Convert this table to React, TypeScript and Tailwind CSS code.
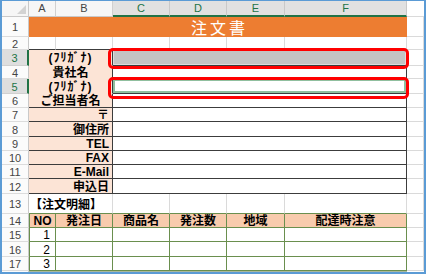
import React from "react";

const GR = "border-r-[#dadada]";
const GB = "border-b-[#dadada]";
const DR = "border-r-[#3c3c3c]";
const DB = "border-b-[#3c3c3c]";
const NR = "border-r-[#6a8f4e]";
const NB = "border-b-[#6a8f4e]";
const TR = "border-r-transparent";
const TB = "border-b-transparent";

function Cell({
  w,
  r,
  b,
  cls = "",
  children,
}: {
  w: string;
  r: string;
  b: string;
  cls?: string;
  children?: React.ReactNode;
}) {
  return (
    <div className={`flex-none h-full border-r border-b ${w} ${r} ${b} ${cls}`}>
      {children}
    </div>
  );
}

function RowHead({ n, sel }: { n: number; sel?: boolean }) {
  if (sel) {
    return (
      <div className="flex-none w-[27px] h-full flex items-center justify-center pt-[2px] bg-[#dedede] border-r-2 border-r-[#217346] border-b border-b-[#d0d0d0] text-[11px] leading-none text-[#217346] font-['Liberation_Sans',sans-serif]">
        {n}
      </div>
    );
  }
  return (
    <div className="flex-none w-[27px] h-full flex items-center justify-center pt-[2px] bg-[#fbfbfb] border-r border-r-[#c9c9c9] border-b border-b-[#dcdcdc] text-[11px] leading-none text-[#444444] font-['Liberation_Sans',sans-serif]">
      {n}
    </div>
  );
}

function Row({ h, children }: { h: string; children: React.ReactNode }) {
  return <div className={`flex ${h}`}>{children}</div>;
}

const labelCenter =
  "bg-[#fce4d6] flex items-center justify-center pt-[1px] text-[12px] leading-none font-bold text-black";
const labelRight =
  "bg-[#fce4d6] flex items-center justify-end pr-[3px] pt-[1px] text-[12px] leading-none font-bold text-black";

function InfoRow({
  h,
  n,
  sel,
  label,
  right,
  labelB,
  data,
}: {
  h: string;
  n: number;
  sel?: boolean;
  label: React.ReactNode;
  right?: boolean;
  labelB: string;
  data?: React.ReactNode;
}) {
  return (
    <Row h={h}>
      <RowHead n={n} sel={sel} />
      <Cell w="w-[84px]" r={DR} b={labelB} cls={right ? labelRight : labelCenter}>
        {label}
      </Cell>
      <Cell w="w-[294px]" r={DR} b={DB}>
        {data}
      </Cell>
      <Cell w="w-[17px]" r={GR} b={GB} />
    </Row>
  );
}

function TableRow({ h, n, no }: { h: string; n: number; no: string }) {
  return (
    <Row h={h}>
      <RowHead n={n} />
      <Cell
        w="w-[27px]"
        r={NR}
        b={NB}
        cls="border-l border-l-[#6a8f4e] flex items-center justify-end pr-[5px] pt-[1px] text-[12px] leading-none text-black"
      >
        {no}
      </Cell>
      <Cell w="w-[57px]" r={NR} b={NB} />
      <Cell w="w-[57px]" r={NR} b={NB} />
      <Cell w="w-[57px]" r={NR} b={NB} />
      <Cell w="w-[58px]" r={NR} b={NB} />
      <Cell w="w-[122px]" r={NR} b={NB} />
      <Cell w="w-[17px]" r={GR} b={GB} />
    </Row>
  );
}

export default function App() {
  const thCls =
    "bg-[#f8cbad] flex items-center justify-center pt-[1px] text-[12px] leading-none font-bold text-black";
  return (
    <div className="relative w-[426px] h-[274px] overflow-hidden bg-white border-l-2 border-r-2 border-b-2 border-t border-[#5b9bd5] font-['Liberation_Sans','Noto_Sans_CJK_JP',sans-serif]">
      {/* column headers */}
      <Row h="h-[16px]">
        <div className="relative flex-none w-[27px] h-full bg-[#f6f6f6] border-r border-r-[#c9c9c9] border-b border-b-[#c9c9c9]">
          <svg className="absolute right-[2px] bottom-[2px]" width="9" height="9" viewBox="0 0 9 9">
            <polygon points="9,0 9,9 0,9" fill="#d3d3d3" />
          </svg>
        </div>
        <div className="flex-none w-[27px] h-full flex items-center justify-center bg-[#f6f6f6] border-r border-r-[#d0d0d0] border-b border-b-[#c9c9c9] text-[11px] leading-none text-[#444444]">
          A
        </div>
        <div className="flex-none w-[57px] h-full flex items-center justify-center bg-[#f6f6f6] border-r border-r-[#d0d0d0] border-b border-b-[#c9c9c9] text-[11px] leading-none text-[#444444]">
          B
        </div>
        <div className="flex-none w-[57px] h-full flex items-center justify-center pt-[1px] bg-[#e1e1e1] border-r border-r-[#c9c9c9] border-b-2 border-b-[#217346] text-[11px] leading-none text-[#217346]">
          C
        </div>
        <div className="flex-none w-[57px] h-full flex items-center justify-center pt-[1px] bg-[#e1e1e1] border-r border-r-[#c9c9c9] border-b-2 border-b-[#217346] text-[11px] leading-none text-[#217346]">
          D
        </div>
        <div className="flex-none w-[58px] h-full flex items-center justify-center pt-[1px] bg-[#e1e1e1] border-r border-r-[#c9c9c9] border-b-2 border-b-[#217346] text-[11px] leading-none text-[#217346]">
          E
        </div>
        <div className="flex-none w-[122px] h-full flex items-center justify-center pt-[1px] bg-[#e1e1e1] border-r border-r-[#c9c9c9] border-b-2 border-b-[#217346] text-[11px] leading-none text-[#217346]">
          F
        </div>
        <div className="flex-1 h-full bg-white border-b border-b-[#dadada]" />
      </Row>

      {/* row 1 title */}
      <Row h="h-[20px]">
        <RowHead n={1} />
        <Cell
          w="w-[378px]"
          r={TR}
          b={TB}
          cls="bg-[#ed7d31] flex items-center justify-center pl-[4px] text-[16px] leading-none tracking-[3px] text-white font-['Noto_Sans_CJK_JP',sans-serif]"
        >
          注文書
        </Cell>
        <Cell w="w-[17px]" r={GR} b={GB} />
      </Row>

      {/* row 2 */}
      <Row h="h-[13px]">
        <RowHead n={2} />
        <Cell w="w-[27px]" r={GR} b={DB} />
        <Cell w="w-[57px]" r={GR} b={DB} />
        <Cell w="w-[57px]" r={GR} b={DB} />
        <Cell w="w-[57px]" r={GR} b={DB} />
        <Cell w="w-[58px]" r={GR} b={DB} />
        <Cell w="w-[122px]" r={GR} b={DB} />
        <Cell w="w-[17px]" r={GR} b={GB} />
      </Row>

      <InfoRow
        h="h-[16px]"
        n={3}
        sel
        label={<span className="tracking-[1px]">(ﾌﾘｶﾞﾅ)</span>}
        labelB={TB}
        data={
          <div className="h-full w-full bg-[#c4c4c4] shadow-[inset_0_0_0_1px_#dcdcdc]" />
        }
      />
      <InfoRow h="h-[13px]" n={4} label="貴社名" labelB={TB} />
      <InfoRow
        h="h-[15px]"
        n={5}
        sel
        label={<span className="tracking-[1px]">(ﾌﾘｶﾞﾅ)</span>}
        labelB={TB}
        data={<div className="h-full w-full border-2 border-[#90bf9f] bg-white" />}
      />
      <InfoRow h="h-[14px]" n={6} label="ご担当者名" labelB={DB} />
      <InfoRow h="h-[14px]" n={7} right label="〒" labelB={DB} />
      <InfoRow h="h-[15px]" n={8} right label="御住所" labelB={DB} />
      <InfoRow h="h-[14px]" n={9} right label="TEL" labelB={DB} />
      <InfoRow h="h-[14px]" n={10} right label="FAX" labelB={DB} />
      <InfoRow h="h-[14px]" n={11} right label="E-Mail" labelB={DB} />
      <InfoRow h="h-[15px]" n={12} right label="申込日" labelB={DB} />

      {/* row 13 */}
      <Row h="h-[20px]">
        <RowHead n={13} />
        <Cell
          w="w-[84px]"
          r={GR}
          b={NB}
          cls="flex items-end pb-[2px] pl-[1px] text-[12px] leading-none font-bold text-black whitespace-nowrap"
        >
          【注文明細】
        </Cell>
        <Cell w="w-[57px]" r={GR} b={NB} />
        <Cell w="w-[57px]" r={GR} b={NB} />
        <Cell w="w-[58px]" r={GR} b={NB} />
        <Cell w="w-[122px]" r={GR} b={NB} />
        <Cell w="w-[17px]" r={GR} b={GB} />
      </Row>

      {/* row 14 table header */}
      <Row h="h-[14px]">
        <RowHead n={14} />
        <Cell w="w-[27px]" r={NR} b={NB} cls={`border-l border-l-[#6a8f4e] ${thCls}`}>
          NO
        </Cell>
        <Cell w="w-[57px]" r={NR} b={NB} cls={thCls}>
          発注日
        </Cell>
        <Cell w="w-[57px]" r={NR} b={NB} cls={thCls}>
          商品名
        </Cell>
        <Cell w="w-[57px]" r={NR} b={NB} cls={thCls}>
          発注数
        </Cell>
        <Cell w="w-[58px]" r={NR} b={NB} cls={thCls}>
          地域
        </Cell>
        <Cell w="w-[122px]" r={NR} b={NB} cls={thCls}>
          配達時注意
        </Cell>
        <Cell w="w-[17px]" r={GR} b={GB} />
      </Row>

      <TableRow h="h-[14px]" n={15} no="1" />
      <TableRow h="h-[15px]" n={16} no="2" />
      <TableRow h="h-[14px]" n={17} no="3" />

      {/* partial row 18 */}
      <Row h="h-[1px]">
        <div className="flex-none w-[27px] h-full bg-[#fbfbfb] border-r border-r-[#c9c9c9]" />
        <div className="flex-none w-[378px] h-full bg-[#a9b99d]" />
        <div className="flex-1 h-full bg-white" />
      </Row>

      {/* red highlight frames */}
      <div className="absolute left-[106px] top-[47px] w-[301px] h-[21px] border-[3px] border-[#ff0000] rounded-[5px]" />
      <div className="absolute left-[106px] top-[76px] w-[301px] h-[22px] border-[3px] border-[#ff0000] rounded-[5px]" />
    </div>
  );
}
